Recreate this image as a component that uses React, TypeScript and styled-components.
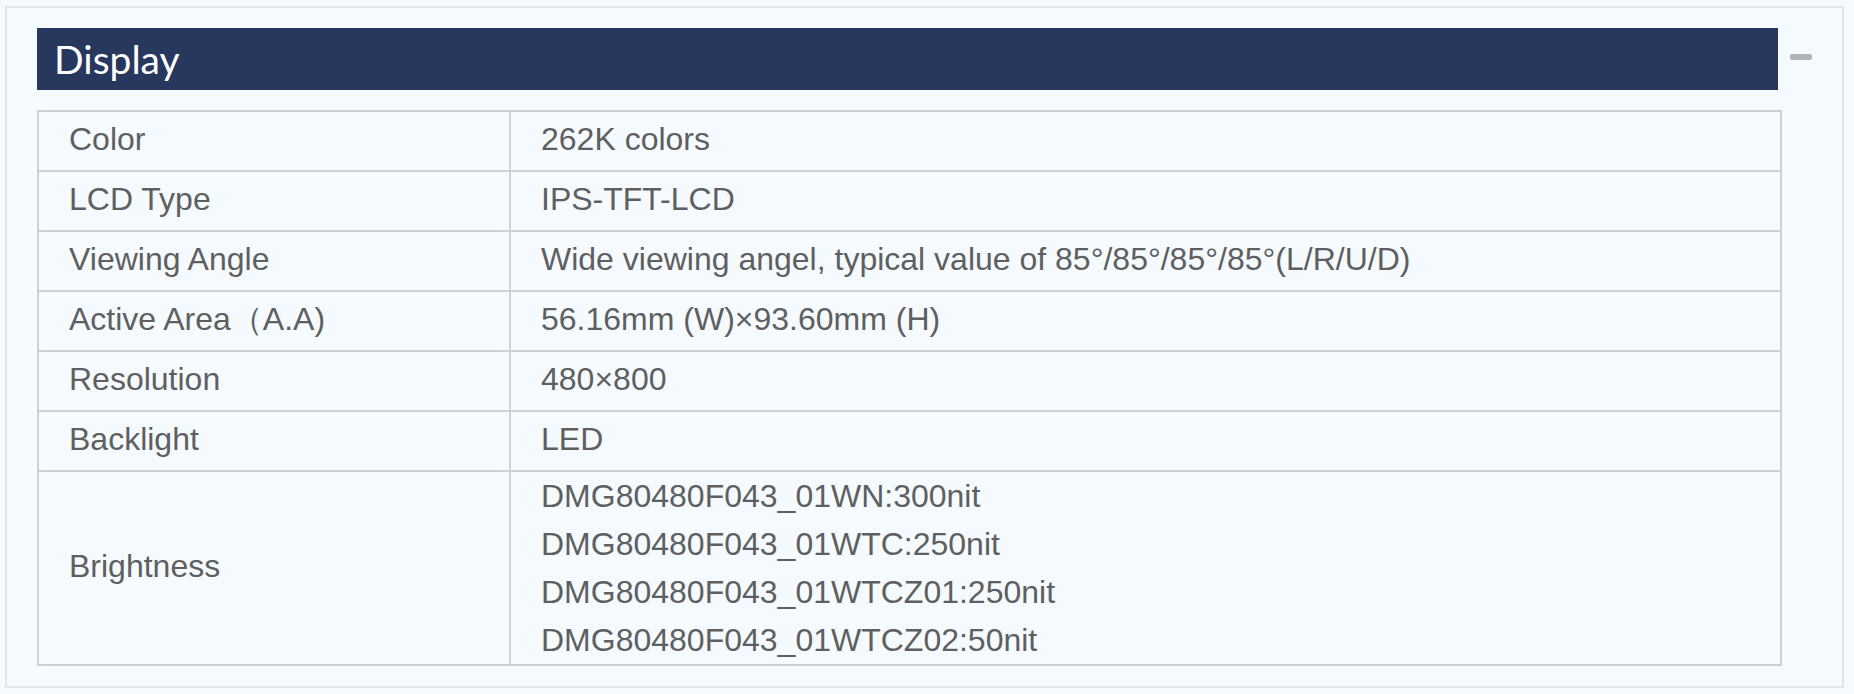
import React from "react";
import styled, { createGlobalStyle } from "styled-components";

const GlobalStyle = createGlobalStyle`
  html, body {
    margin: 0;
    padding: 0;
    background: #f5faff;
  }
  body {
    padding: 6px 10px 6px 5px;
    font-family: "Liberation Sans", Arial, sans-serif;
  }
`;

const Panel = styled.section`
  box-sizing: border-box;
  width: 1839px;
  border: 2px solid #e2e6ea;
  background: #f5faff;
  padding: 20px 60px 20px 30px;
  display: flex;
  flex-direction: column;
  gap: 20px;
`;

const HeaderRow = styled.div`
  display: flex;
  align-items: flex-start;
`;

const Title = styled.h2`
  box-sizing: border-box;
  flex: 0 0 1741px;
  margin: 0;
  height: 62px;
  background: #28375d;
  color: #ffffff;
  display: flex;
  align-items: center;
  padding-left: 17px;
  font-family: Lato, "Open Sans", sans-serif;
  font-weight: 400;
  font-size: 39px;
`;

const Collapse = styled.button`
  flex: 0 0 22px;
  margin: 26px 0 0 12px;
  padding: 0;
  height: 6px;
  border: none;
  border-radius: 2px;
  background: #b2b2b2;
  cursor: pointer;
`;

const Table = styled.table`
  width: 1745px;
  border-collapse: collapse;
  table-layout: fixed;
  font-family: "Liberation Sans", Arial, sans-serif;
  font-size: 32px;
  line-height: 48px;
  color: #5f5f5f;
`;

const Cell = styled.td<{ $dense?: boolean }>`
  border: 2px solid #cfd0d2;
  padding: ${(p) => (p.$dense ? "0 30px" : "3px 30px 7px")};
  vertical-align: middle;
  text-align: left;
  white-space: nowrap;
`;

const Line = styled.div`
  line-height: 48px;
`;

const rows: [string, string | string[]][] = [
  ["Color", "262K colors"],
  ["LCD Type", "IPS-TFT-LCD"],
  ["Viewing Angle", "Wide viewing angel, typical value of 85°/85°/85°/85°(L/R/U/D)"],
  ["Active Area（A.A)", "56.16mm (W)×93.60mm (H)"],
  ["Resolution", "480×800"],
  ["Backlight", "LED"],
  [
    "Brightness",
    [
      "DMG80480F043_01WN:300nit",
      "DMG80480F043_01WTC:250nit",
      "DMG80480F043_01WTCZ01:250nit",
      "DMG80480F043_01WTCZ02:50nit",
    ],
  ],
];

export default function App() {
  return (
    <>
      <GlobalStyle />
      <Panel>
        <HeaderRow>
          <Title>Display</Title>
          <Collapse aria-label="collapse" />
        </HeaderRow>
        <Table>
          <colgroup>
            <col style={{ width: 472 }} />
            <col />
          </colgroup>
          <tbody>
            {rows.map(([label, value]) => (
              <tr key={label}>
                <Cell>{label}</Cell>
                {Array.isArray(value) ? (
                  <Cell $dense>
                    {value.map((v) => (
                      <Line key={v}>{v}</Line>
                    ))}
                  </Cell>
                ) : (
                  <Cell>{value}</Cell>
                )}
              </tr>
            ))}
          </tbody>
        </Table>
      </Panel>
    </>
  );
}
